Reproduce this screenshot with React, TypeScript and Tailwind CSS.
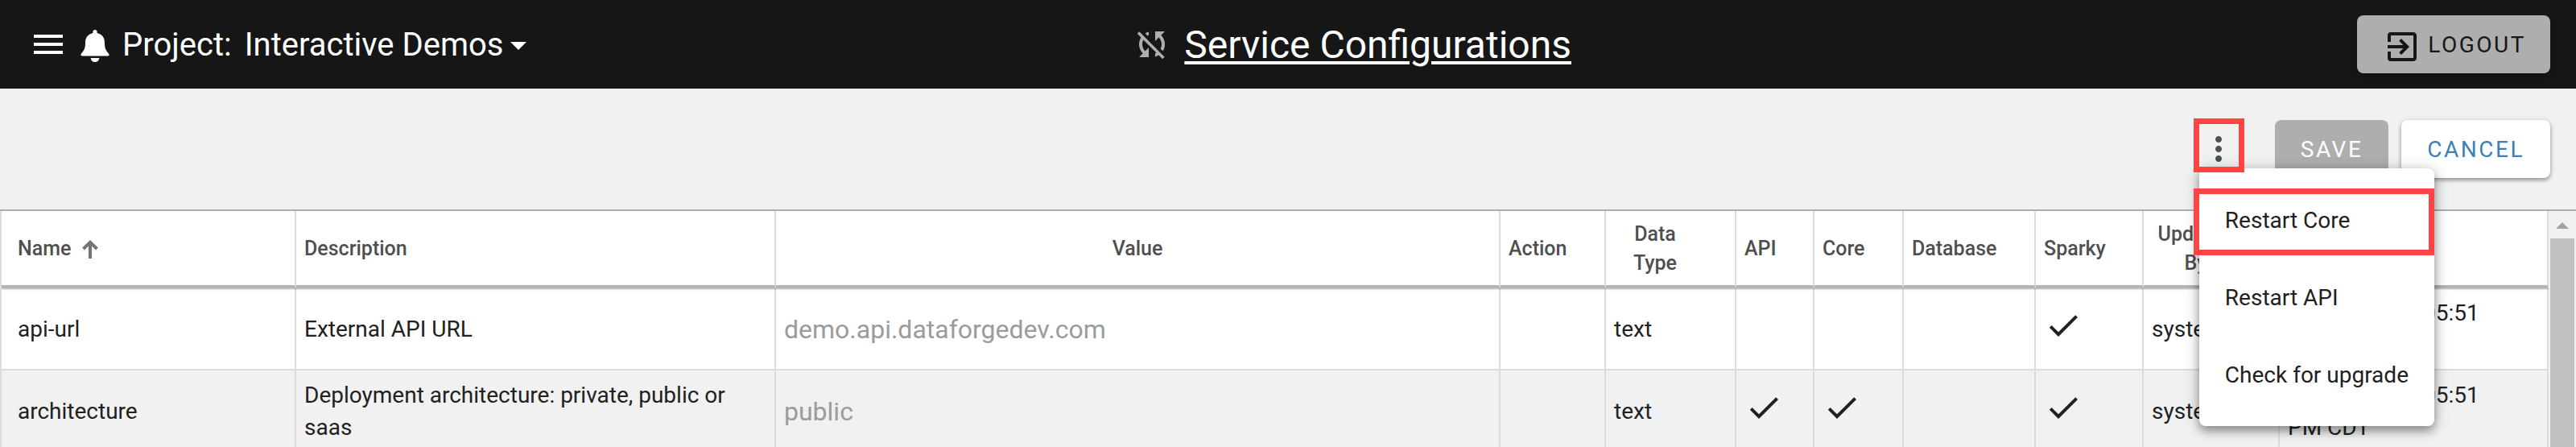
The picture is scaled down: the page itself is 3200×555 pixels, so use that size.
import { MdArrowDropDown, MdCheck, MdExitToApp, MdMenu, MdMoreVert, MdSyncDisabled } from 'react-icons/md';

interface ConfigRow {
    name: string;
    description: string;
    value: string;
    dataType: string;
    api: boolean;
    core: boolean;
    database: boolean;
    sparky: boolean;
    updatedBy: string;
    updatedAt: string;
}

const rows: ConfigRow[] = [
    {
        name: 'api-url',
        description: 'External API URL',
        value: 'demo.api.dataforgedev.com',
        dataType: 'text',
        api: false,
        core: false,
        database: false,
        sparky: true,
        updatedBy: 'system',
        updatedAt: 'Sep 14, 2023 05:51',
    },
    {
        name: 'architecture',
        description: 'Deployment architecture: private, public or saas',
        value: 'public',
        dataType: 'text',
        api: true,
        core: true,
        database: false,
        sparky: true,
        updatedBy: 'system',
        updatedAt: 'Sep 14, 2023 05:51',
    },
];

const menuItems = ['Restart Core', 'Restart API', 'Check for upgrade'];

const th = 'h-24 border-r-2 border-b-4 border-r-[#dcdcdc] border-b-[#b4b4b4] pt-0.5 font-medium';
const td = 'h-[102px] border-r-2 border-b-2 border-[#dcdcdc] pt-0.5 pl-2.5 align-middle';
const button = 'h-18 rounded-lg pt-0.5 text-[28px] tracking-[0.0893em] uppercase';

function BellIcon() {
    return (
        <svg width="36" height="40" viewBox="0 0 36 40" fill="currentColor" aria-hidden="true">
            <path d="M18 0c-1.600 0-2.600 1.100-2.600 2.500v1.400C9.500 5.200 6 9.500 6 15.500c0 7-1 9.500-4.800 13.700C-.3 31 .3 32.500 2 32.500h32c1.700 0 2.300-1.500.8-3.300C31 25 30 22.500 30 15.500c0-6-3.500-10.300-9.400-11.600V2.500C20.600 1.100 19.600 0 18 0z" />
            <path d="M12.600 35h10.800c-.3 3-2.400 5-5.400 5s-5.100-2-5.400-5z" />
        </svg>
    );
}

function SortArrow() {
    return (
        <svg width="20" height="23" viewBox="0 0 20 23" fill="none" stroke="#757575" strokeWidth="4" aria-hidden="true">
            <path d="M10 23V3M1.500 11 10 2.800 18.500 11" />
        </svg>
    );
}

function Flag({ on, label }: { on: boolean; label: string }) {
    return <td className={td}>{on && <MdCheck size={48} className="mb-2.5" aria-label={label} />}</td>;
}

function TopBar() {
    return (
        <header className="flex h-[110px] items-center bg-[#161616] pr-8 pl-9 text-white">
            <div className="flex flex-[17] items-center">
                <button aria-label="Menu">
                    <MdMenu size={48} />
                </button>
                <button aria-label="Notifications" className="mt-1 mr-4 ml-4">
                    <BellIcon />
                </button>
                <span className="pt-0.5 text-[40px]">Project:</span>
                <button className="ml-4 flex items-center pt-0.5 text-[40px]">
                    Interactive Demos
                    <MdArrowDropDown size={48} className="-ml-1.5" />
                </button>
            </div>
            <div className="mr-1.5 flex items-center gap-4">
                <MdSyncDisabled size={48} className="text-[#aeaeae]" />
                <h1 className="pt-0.5 text-[48px]">
                    <a href="#docs" className="underline decoration-4 underline-offset-4">Service Configurations</a>
                </h1>
            </div>
            <div className="flex flex-[15] justify-end">
                <button className={`${button} flex items-center gap-2 bg-[#aeaeae] pr-[30px] pl-8 text-[#161616] shadow-md`}>
                    <MdExitToApp size={48} className="mt-1" />
                    Logout
                </button>
            </div>
        </header>
    );
}

function ActionsMenu() {
    return (
        <div className="relative">
            <button aria-label="More actions" aria-expanded="true" className="block text-[#4f4f4f]">
                <MdMoreVert size={48} />
            </button>
            <span className="absolute -top-3.5 -left-[7px] z-20 h-[67px] w-[63px] border-[7px] border-[#ff4444]" />
            <ul className="absolute top-12 left-0 z-10 w-[292px] rounded-lg bg-white py-4 text-[28px] text-[#212121] shadow-[0_6px_12px_rgba(0,0,0,0.35),0_2px_20px_rgba(0,0,0,0.2)]">
                {menuItems.map(item => (
                    <li key={item}>
                        <button className="h-24 w-full pt-0.5 pl-8 text-left">{item}</button>
                    </li>
                ))}
                <li aria-hidden="true" className="pointer-events-none absolute top-[25px] right-0 -left-[7px] h-[83px] border-[7px] border-[#ff4444]" />
            </ul>
        </div>
    );
}

export default function App() {
    return (
        <div className="min-h-screen bg-[#f1f1f1] font-['Roboto',sans-serif] text-[#212121]">
            <TopBar />
            <div className="flex h-[150px] items-center justify-end gap-4 pr-8">
                <div className="mr-[30px]">
                    <ActionsMenu />
                </div>
                <button className={`${button} bg-[#aeaeae] px-8 text-white`}>Save</button>
                <button className={`${button} bg-white px-8 text-[#3f7fb5] shadow-[0_3px_5px_rgba(0,0,0,0.3),0_1px_6px_rgba(0,0,0,0.15)]`}>Cancel</button>
            </div>
            <div className="flex h-[295px] overflow-hidden border-t-2 border-[#aeaeae]">
                <div className="min-w-0 flex-1 overflow-hidden border-l-2 border-[#dcdcdc]">
                    <table className="w-full table-fixed border-separate border-spacing-0 bg-white text-[28px] leading-10">
                        <colgroup>
                            <col className="w-[366px]" />
                            <col className="w-[596px]" />
                            <col />
                            <col className="w-[131px]" />
                            <col className="w-[162px]" />
                            <col className="w-[97px]" />
                            <col className="w-[111px]" />
                            <col className="w-[164px]" />
                            <col className="w-[134px]" />
                            <col className="w-[169px]" />
                            <col className="w-[334px]" />
                        </colgroup>
                        <thead className="relative text-[25px] leading-9 text-[#4f4f4f] shadow-[0_1px_2px_rgba(0,0,0,0.3)]">
                            <tr>
                                <th className={`${th} pl-5 text-left`} aria-sort="ascending">
                                    <span className="flex items-center gap-3.5">
                                        Name
                                        <SortArrow />
                                    </span>
                                </th>
                                <th className={`${th} pl-2.5 text-left`}>Description</th>
                                <th className={`${th} text-center`}>Value</th>
                                <th className={`${th} pl-2.5 text-left`}>Action</th>
                                <th className={`${th} pr-12 pl-2.5 text-center`}>Data Type</th>
                                <th className={`${th} pl-2.5 text-left`}>API</th>
                                <th className={`${th} pl-2.5 text-left`}>Core</th>
                                <th className={`${th} pl-2.5 text-left`}>Database</th>
                                <th className={`${th} pl-2.5 text-left`}>Sparky</th>
                                <th className={`${th} pr-12 pl-2.5 text-center`}>Updated By</th>
                                <th className={`${th} pl-2.5 text-left`}>Updated On</th>
                            </tr>
                        </thead>
                        <tbody>
                            {rows.map(row => (
                                <tr key={row.name} className="even:bg-[#f1f1f1]">
                                    <td className={`${td} pl-5`}>{row.name}</td>
                                    <td className={td}>{row.description}</td>
                                    <td className={td}>
                                        <input
                                            className="w-full bg-transparent pt-0.5 text-[32px] text-[#9b9b9b]"
                                            aria-label={`${row.name} value`}
                                            defaultValue={row.value}
                                            disabled
                                        />
                                    </td>
                                    <td className={td} />
                                    <td className={td}>{row.dataType}</td>
                                    <Flag on={row.api} label="API" />
                                    <Flag on={row.core} label="Core" />
                                    <Flag on={row.database} label="Database" />
                                    <Flag on={row.sparky} label="Sparky" />
                                    <td className={td}>{row.updatedBy}</td>
                                    <td className={td}>
                                        {row.updatedAt} <span className="whitespace-nowrap">PM CDT</span>
                                    </td>
                                </tr>
                            ))}
                        </tbody>
                    </table>
                </div>
                <div className="flex w-[34px] flex-col items-center bg-[#f1f1f1]" aria-hidden="true">
                    <svg width="16" height="34" viewBox="0 0 16 34" fill="#a3a3a3">
                        <path d="M0 22 8 14l8 8z" />
                    </svg>
                    <div className="w-[30px] flex-1 bg-[#c1c1c1]" />
                </div>
            </div>
        </div>
    );
}
